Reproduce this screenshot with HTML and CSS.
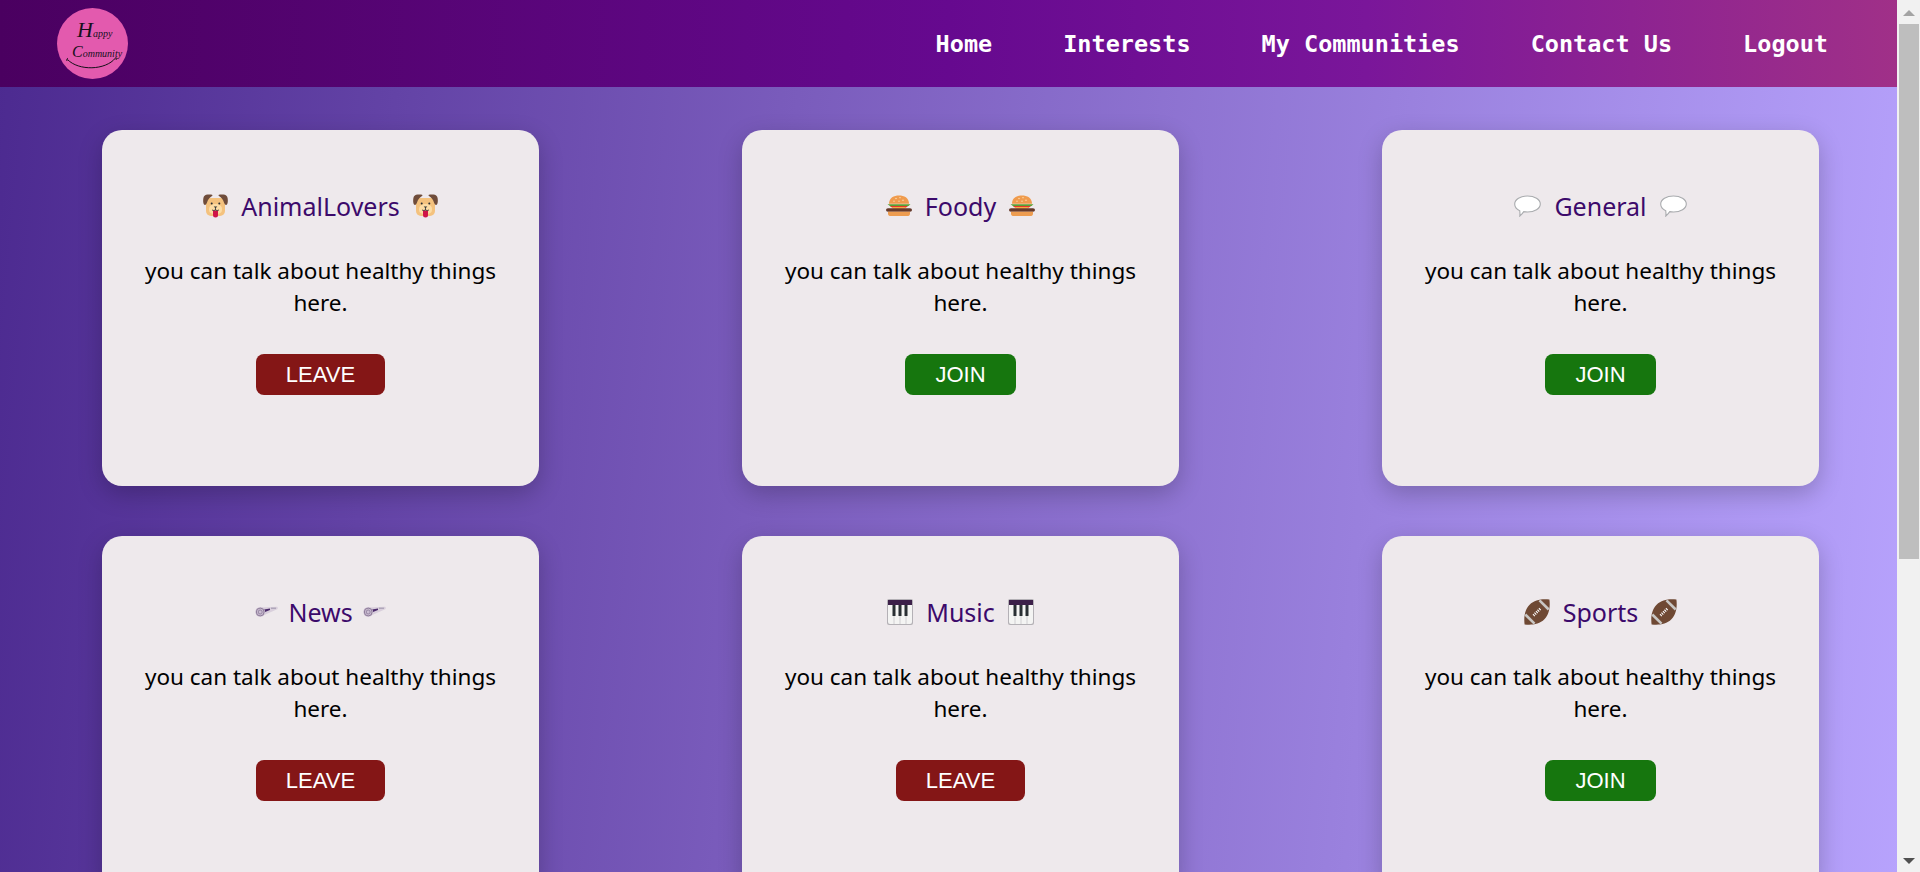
FILE: index.html
```html
<!DOCTYPE html>
<html lang="en">
<head>
<meta charset="utf-8">
<title>Happy Community</title>
<link rel="stylesheet" href="styles.css">
</head>
<body>
<svg class="defs" width="0" height="0" aria-hidden="true">
  <symbol id="dog" viewBox="0 0 25 24">
    <path d="M3 4h19v13a5 5 0 0 1-5 5H8a5 5 0 0 1-5-5z" fill="#f4c27e"/>
    <path d="M4.500.5h3.500c1.500 0 2 .8 1 1.600C7.500 3.200 5 5 3.800 9 3.200 11 1.800 11.500 1 10.500 0 9 0 6 .4 4 .8 1.800 2.500.5 4.500.5z" fill="#6f4c3a"/>
    <path d="M20.500.5H17c-1.500 0-2 .8-1 1.600 1.500 1.100 4 2.900 5.200 6.900.6 2 2 2.500 2.800 1.500 1-1.500 1-4.500.6-6.500C24.200 1.800 22.500.5 20.500.5z" fill="#6f4c3a"/>
    <path d="M12.500 10c3.500 0 6.500 1.500 6.500 5.500 0 3.500-2.500 4.500-6.500 4.500s-6.500-1-6.500-4.500C6 11.500 9 10 12.500 10z" fill="#fcdca4"/>
    <circle cx="8.700" cy="9.500" r="1" fill="#292f33"/><circle cx="16.300" cy="9.500" r="1" fill="#292f33"/>
    <path d="M10.700 12.500h3.600l-1.800 1.800z" fill="#292f33"/>
    <path d="M10 16.500h5v4.500a2.500 2.500 0 0 1-5 0z" fill="#cf1448"/>
    <path d="M9 16q1.800 1 3.500 0q1.700 1 3.500 0M12.500 14v2" fill="none" stroke="#292f33" stroke-width=".8"/>
  </symbol>
  <symbol id="burger" viewBox="0 0 26 24" preserveAspectRatio="none">
    <path d="M3 10C3 3 8 .5 13 .5S23 3 23 10z" fill="#f09b4d"/>
    <g fill="#fbd9a8"><circle cx="10" cy="4" r=".8"/><circle cx="14" cy="3" r=".8"/><circle cx="17" cy="6" r=".8"/><circle cx="8" cy="7" r=".8"/><circle cx="13" cy="7" r=".8"/></g>
    <path d="M1.500 10.500h23l-2 2-3 .5-2.500 1-3-1-3 1-3-1-3 .5z" fill="#5c9e31"/>
    <path d="M4 12.500h18l-3 2.500H7z" fill="#e8392c"/>
    <path d="M5 14h16l-6 2h-5z" fill="#ffcc4d"/>
    <rect x="0" y="15" width="26" height="4" rx="2" fill="#65392a"/>
    <path d="M2 19h22v2a3 3 0 0 1-3 3H5a3 3 0 0 1-3-3z" fill="#ed9c50"/>
  </symbol>
  <symbol id="bubble" viewBox="0 0 27 22">
    <path d="M13.500 1C20.500 1 26.300 4.400 26.300 9s-5.800 8-12.800 8c-1.300 0-2.500-.1-3.700-.4C8.600 18.300 7 20 5.800 21c.3-1.800.2-3.300-.1-5.300C2.600 14.300.7 11.800.7 9 .7 4.400 6.500 1 13.500 1z" fill="#fff" stroke="#a9abae" stroke-width="1.100"/>
  </symbol>
  <symbol id="roll" viewBox="0 0 23 11">
    <path d="M5 1.500 22 .8c1 .2 1 2 .2 2.400L7 10z" fill="#d9cfdc"/>
    <path d="M9 3.500 15 2.500 15 4 10 6z" fill="#4a2a6a"/>
    <path d="M16 2.200h5" stroke="#8d86a0" stroke-width=".8"/>
    <circle cx="5.200" cy="6" r="4.800" fill="#cbbdd2"/>
    <circle cx="5.200" cy="6" r="3.900" fill="none" stroke="#7d6c8a" stroke-width=".8"/>
    <circle cx="5.200" cy="6" r="2" fill="none" stroke="#8a7a98" stroke-width=".8"/>
  </symbol>
  <symbol id="piano" viewBox="0 0 26 26">
    <rect width="26" height="26" rx="2" fill="#b4b1b6"/>
    <path d="M1 1h24v5H1z" fill="#3c2049"/>
    <path d="M1 6h24v17a2 2 0 0 1-2 2H3a2 2 0 0 1-2-2z" fill="#f4f4f3"/>
    <path d="M7 14v11M13 17v8M19 14v11" stroke="#c8c6c9" stroke-width=".8"/>
    <rect x="5.500" y="6" width="3" height="11" fill="#292f33"/><rect x="11.500" y="6" width="3" height="11" fill="#292f33"/><rect x="17.500" y="6" width="3" height="11" fill="#292f33"/>
  </symbol>
  <symbol id="ball" viewBox="0 0 26 26">
    <path d="M25.400.6C18.500-.3 10.700.6 5.600 5.700.5 10.800-.3 18.500.6 25.400c6.900.9 14.700 0 19.800-5.100C25.500 15.200 26.300 7.500 25.400.6z" fill="#6f4934"/>
    <path d="M15.500 1.300 24.700 10.500M1.300 15.500 10.500 24.700" stroke="#c9c7c4" stroke-width="2.600" fill="none"/>
    <path d="M9.500 16.500l7-7" stroke="#fff" stroke-width="2.600" stroke-dasharray="1.100 1" fill="none"/>
  </symbol>
</svg>

<div class="page">
  <header class="navbar">
    <a class="logo" href="#" aria-label="Happy Community">
      <svg viewBox="0 0 71 71" width="71" height="71">
        <circle cx="35.500" cy="35.500" r="35.500" fill="#e35aae"/>
        <text class="logo-line" x="20" y="29"><tspan class="logo-big">H</tspan>appy</text>
        <text class="logo-line" x="15" y="49"><tspan class="logo-mid">C</tspan>ommunity</text>
        <path d="M11 50c-1 .8-1.500 1.500-1 3M10.500 51.500c11 11.500 38 11 48-1.500M58.500 49c1 1 1 2 .5 3" fill="none" stroke="#141018" stroke-width="1"/>
      </svg>
    </a>
    <nav class="nav-links">
      <a href="#">Home</a>
      <a href="#">Interests</a>
      <a href="#">My Communities</a>
      <a href="#">Contact Us</a>
      <a href="#">Logout</a>
    </nav>
  </header>

  <main class="grid">
    <article class="card">
      <h2 class="card-title"><svg class="ico"><use href="#dog"/></svg><span>AnimalLovers</span><svg class="ico"><use href="#dog"/></svg></h2>
      <p class="card-text">you can talk about healthy things here.</p>
      <button class="btn btn-leave">LEAVE</button>
    </article>
    <article class="card">
      <h2 class="card-title"><svg class="ico ico-burger"><use href="#burger"/></svg><span>Foody</span><svg class="ico ico-burger"><use href="#burger"/></svg></h2>
      <p class="card-text">you can talk about healthy things here.</p>
      <button class="btn btn-join">JOIN</button>
    </article>
    <article class="card">
      <h2 class="card-title"><svg class="ico ico-bubble"><use href="#bubble"/></svg><span>General</span><svg class="ico ico-bubble"><use href="#bubble"/></svg></h2>
      <p class="card-text">you can talk about healthy things here.</p>
      <button class="btn btn-join">JOIN</button>
    </article>
    <article class="card">
      <h2 class="card-title tight"><svg class="ico ico-roll"><use href="#roll"/></svg><span>News</span><svg class="ico ico-roll"><use href="#roll"/></svg></h2>
      <p class="card-text">you can talk about healthy things here.</p>
      <button class="btn btn-leave">LEAVE</button>
    </article>
    <article class="card">
      <h2 class="card-title"><svg class="ico ico-wide"><use href="#piano"/></svg><span>Music</span><svg class="ico ico-wide"><use href="#piano"/></svg></h2>
      <p class="card-text">you can talk about healthy things here.</p>
      <button class="btn btn-leave">LEAVE</button>
    </article>
    <article class="card">
      <h2 class="card-title"><svg class="ico ico-wide"><use href="#ball"/></svg><span>Sports</span><svg class="ico ico-wide"><use href="#ball"/></svg></h2>
      <p class="card-text">you can talk about healthy things here.</p>
      <button class="btn btn-join">JOIN</button>
    </article>
  </main>
</div>

<aside class="scrollbar" aria-hidden="true">
  <div class="arrow arrow-up"></div>
  <div class="thumb"></div>
  <div class="arrow arrow-down"></div>
</aside>
</body>
</html>
```
FILE: styles.css
```css
html { scrollbar-width: none; }
html::-webkit-scrollbar { display: none; }
* { box-sizing: border-box; }
body {
  margin: 0;
  font-family: "Noto Sans", sans-serif;
}
.defs { position: absolute; }
.page {
  margin-right: 23px;
  background: linear-gradient(95deg, #4c2a90 0%, #7a5cbc 40%, #b9a5ff 100%);
}
.scrollbar {
  position: fixed;
  top: 0;
  right: 0;
  bottom: 0;
  width: 23px;
  padding: 10px 1px 8px 2px;
  background: #f1f1f1;
  display: flex;
  flex-direction: column;
  align-items: center;
}
.thumb {
  width: 20px;
  height: 535px;
  margin: 8px 0 auto;
  background: #bebebe;
}
.arrow { width: 0; height: 0; border-left: 6px solid transparent; border-right: 6px solid transparent; }
.arrow-up { border-bottom: 6px solid #a3a3a3; }
.arrow-down { border-top: 6px solid #505050; }
.navbar {
  height: 87px;
  display: flex;
  align-items: center;
  justify-content: space-between;
  padding: 0 69px 0 57px;
  background: linear-gradient(90deg, #4a0060 0%, #66098f 50%, #7a169a 72%, #a03088 100%);
}
.logo { display: block; width: 71px; height: 71px; }
.logo-line { font: italic 10px "Liberation Serif", serif; fill: #17101c; }
.logo-big { font-size: 22px; }
.logo-mid { font-size: 16px; }
.nav-links { display: flex; gap: 71px; margin-top: 1px; }
.nav-links a {
  color: #fff;
  text-decoration: none;
  font: bold 23.500px "DejaVu Sans Mono", monospace;
}
.grid {
  display: grid;
  grid-template-columns: repeat(3, 437px);
  justify-content: space-between;
  row-gap: 50px;
  padding: 43px 78px 474px 102px;
}
.card {
  height: 356px;
  background: #eee9ec;
  border-radius: 20px;
  box-shadow: 0 8px 24px rgba(0, 0, 0, .22);
  padding: 58px 40px 0;
  text-align: center;
}
.card-title {
  margin: 0 0 32px;
  height: 35px;
  display: flex;
  justify-content: center;
  align-items: center;
  gap: 13px;
  color: #3c0a6b;
  font-size: 25px;
  font-weight: 400;
}
.card-title.tight { gap: 10px; }
.ico { width: 25px; height: 24px; flex: none; }
.ico-wide { width: 26px; height: 26px; }
.ico-burger { width: 26px; height: 21px; }
.ico-bubble { width: 27px; height: 22px; }
.ico-roll { width: 23px; height: 11px; }
.card-text {
  margin: 0 0 35px;
  font-size: 22.500px;
  line-height: 32px;
  color: #000;
}
.btn {
  display: inline-block;
  height: 41px;
  padding: 0 30px;
  border: 0;
  border-radius: 8px;
  color: #fff;
  font: 22px "Liberation Sans", sans-serif;
}
.btn-leave { background: #841616; }
.btn-join { background: #16760e; }
```
